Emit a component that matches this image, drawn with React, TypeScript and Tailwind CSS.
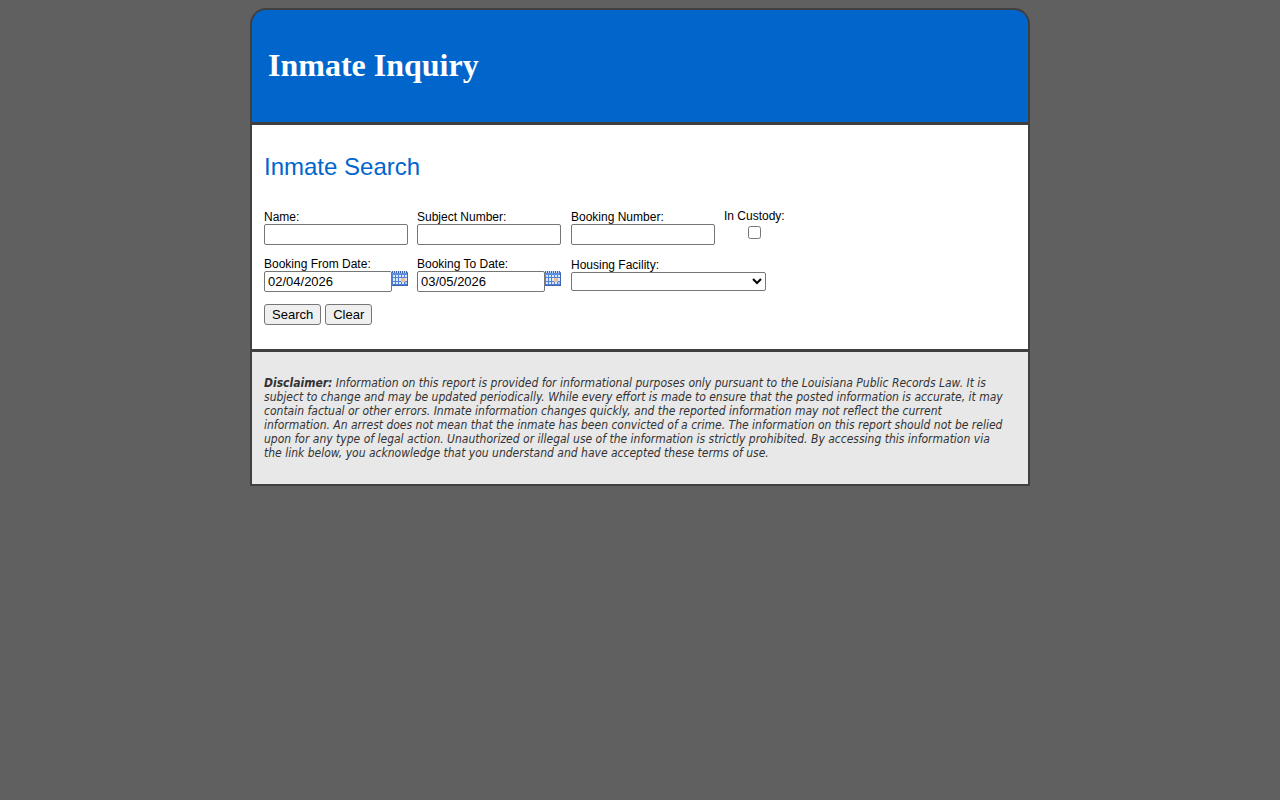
import type { ReactNode } from "react";

const inputClass =
  "h-[21px] rounded-[2px] border border-[#767676] bg-white px-[3px] text-[13px] text-black";
const buttonClass =
  "h-[21px] rounded-[3px] border border-[#767676] bg-[#efefef] px-[7px] text-[13px] leading-4 text-black";

function CalendarIcon() {
  return (
    <svg width="16" height="16" viewBox="0 0 16 16" aria-hidden="true">
      <rect x="0" y="1" width="16" height="14" fill="#4f82d6" />
      <rect x="0" y="1" width="16" height="3" fill="#5b8ee0" />
      <path
        d="M0.5 0v2M2.5 0v2M4.5 0v2M6.5 0v2M8.5 0v2M10.5 0v2M12.5 0v2M14.5 0v2"
        stroke="#3f65ad"
        strokeWidth="1"
      />
      <path
        d="M1.5 0v2M3.5 0v2M5.5 0v2M7.5 0v2M9.5 0v2M11.5 0v2M13.5 0v2"
        stroke="#c3d6f6"
        strokeWidth="1"
      />
      <path
        d="M1 4h2v2H1zM4 4h2v2H4zM7 4h2v2H7zM10 4h2v2h-2zM13 4h2v2h-2zM1 7h2v3H1zM4 7h2v3H4zM7 7h2v3H7zM13 7h2v3h-2zM1 11h2v2H1zM4 11h2v2H4zM7 11h2v2H7zM10 11h2v2h-2z"
        fill="#dce8fb"
      />
      <rect x="9" y="7" width="4" height="4" fill="#eebd9a" />
      <path d="M13 11h2v2h-2z" fill="#a9c3ee" />
      <path d="M0 14.5h16M15.5 2v13" stroke="#3d64ad" strokeWidth="1" />
    </svg>
  );
}

type FieldProps = {
  id: string;
  label: string;
  children: ReactNode;
};

function Field({ id, label, children }: FieldProps) {
  return (
    <div className="flex flex-col items-start">
      <label htmlFor={id} className="text-xs leading-[14px]">
        {label}
      </label>
      {children}
    </div>
  );
}

function DateField({ id, label, value }: { id: string; label: string; value: string }) {
  return (
    <Field id={id} label={label}>
      <div className="flex items-start">
        <input id={id} type="text" defaultValue={value} className={`${inputClass} w-32`} />
        <button type="button" aria-label="Open calendar">
          <CalendarIcon />
        </button>
      </div>
    </Field>
  );
}

function SearchForm() {
  return (
    <form onSubmit={(e) => e.preventDefault()}>
      <div className="grid grid-cols-[153px_154px_153px_auto] items-center justify-start gap-y-[11px]">
        <Field id="name" label="Name:">
          <input id="name" type="text" className={`${inputClass} w-36`} />
        </Field>
        <Field id="subjectNumber" label="Subject Number:">
          <input id="subjectNumber" type="text" className={`${inputClass} w-36`} />
        </Field>
        <Field id="bookingNumber" label="Booking Number:">
          <input id="bookingNumber" type="text" className={`${inputClass} w-36`} />
        </Field>
        <div className="flex flex-col items-center gap-[3px] pb-[7px]">
          <label htmlFor="inCustody" className="text-xs leading-[14px]">
            In Custody:
          </label>
          <input id="inCustody" type="checkbox" className="size-[13px]" />
        </div>

        <DateField id="fromDate" label="Booking From Date:" value="02/04/2026" />
        <DateField id="toDate" label="Booking To Date:" value="03/05/2026" />
        <div className="col-span-2">
          <Field id="facility" label="Housing Facility:">
            <select
              id="facility"
              className="h-[19px] w-[195px] rounded-[2px] border border-[#767676] bg-white text-[13px]"
            >
              <option value=""></option>
            </select>
          </Field>
        </div>
      </div>

      <div className="mt-3 flex gap-1">
        <button type="submit" className={buttonClass}>
          Search
        </button>
        <button type="reset" className={buttonClass}>
          Clear
        </button>
      </div>
    </form>
  );
}

export default function App() {
  return (
    <div className="min-h-screen bg-[#606060] pt-2 font-['Liberation_Sans',Arial,sans-serif] text-black">
      <div className="mx-auto max-w-[780px] overflow-hidden rounded-t-2xl border-2 border-[#404040] bg-[#404040]">
        <header className="border-b-3 border-[#404040] bg-[#0066cc] px-4 pt-[35px] pb-[37px]">
          <h1 className="font-['Liberation_Serif','Times_New_Roman',serif] text-[32px] leading-10 font-bold text-white">
            Inmate Inquiry
          </h1>
        </header>

        <main className="bg-white px-3 pt-[26px] pb-6">
          <h2 className="mb-[26px] text-2xl leading-8 text-[#0066cc]">Inmate Search</h2>
          <SearchForm />
        </main>

        <footer className="border-t-3 border-[#404040] bg-[#e8e8e8] px-3 py-6">
          <p className="font-['DejaVu_Sans_Condensed','Open_Sans',sans-serif] text-xs leading-[14px] text-[#333333] italic">
            <strong>Disclaimer:</strong> Information on this report is provided for
            informational purposes only pursuant to the Louisiana Public Records Law. It is
            <br />
            subject to change and may be updated periodically. While every effort is made to
            ensure that the posted information is accurate, it may
            <br />
            contain factual or other errors. Inmate information changes quickly, and the
            reported information may not reflect the current
            <br />
            information. An arrest does not mean that the inmate has been convicted of a
            crime. The information on this report should not be relied
            <br />
            upon for any type of legal action. Unauthorized or illegal use of the information
            is strictly prohibited. By accessing this information via
            <br />
            the link below, you acknowledge that you understand and have accepted these terms
            of use.
          </p>
        </footer>
      </div>
    </div>
  );
}
